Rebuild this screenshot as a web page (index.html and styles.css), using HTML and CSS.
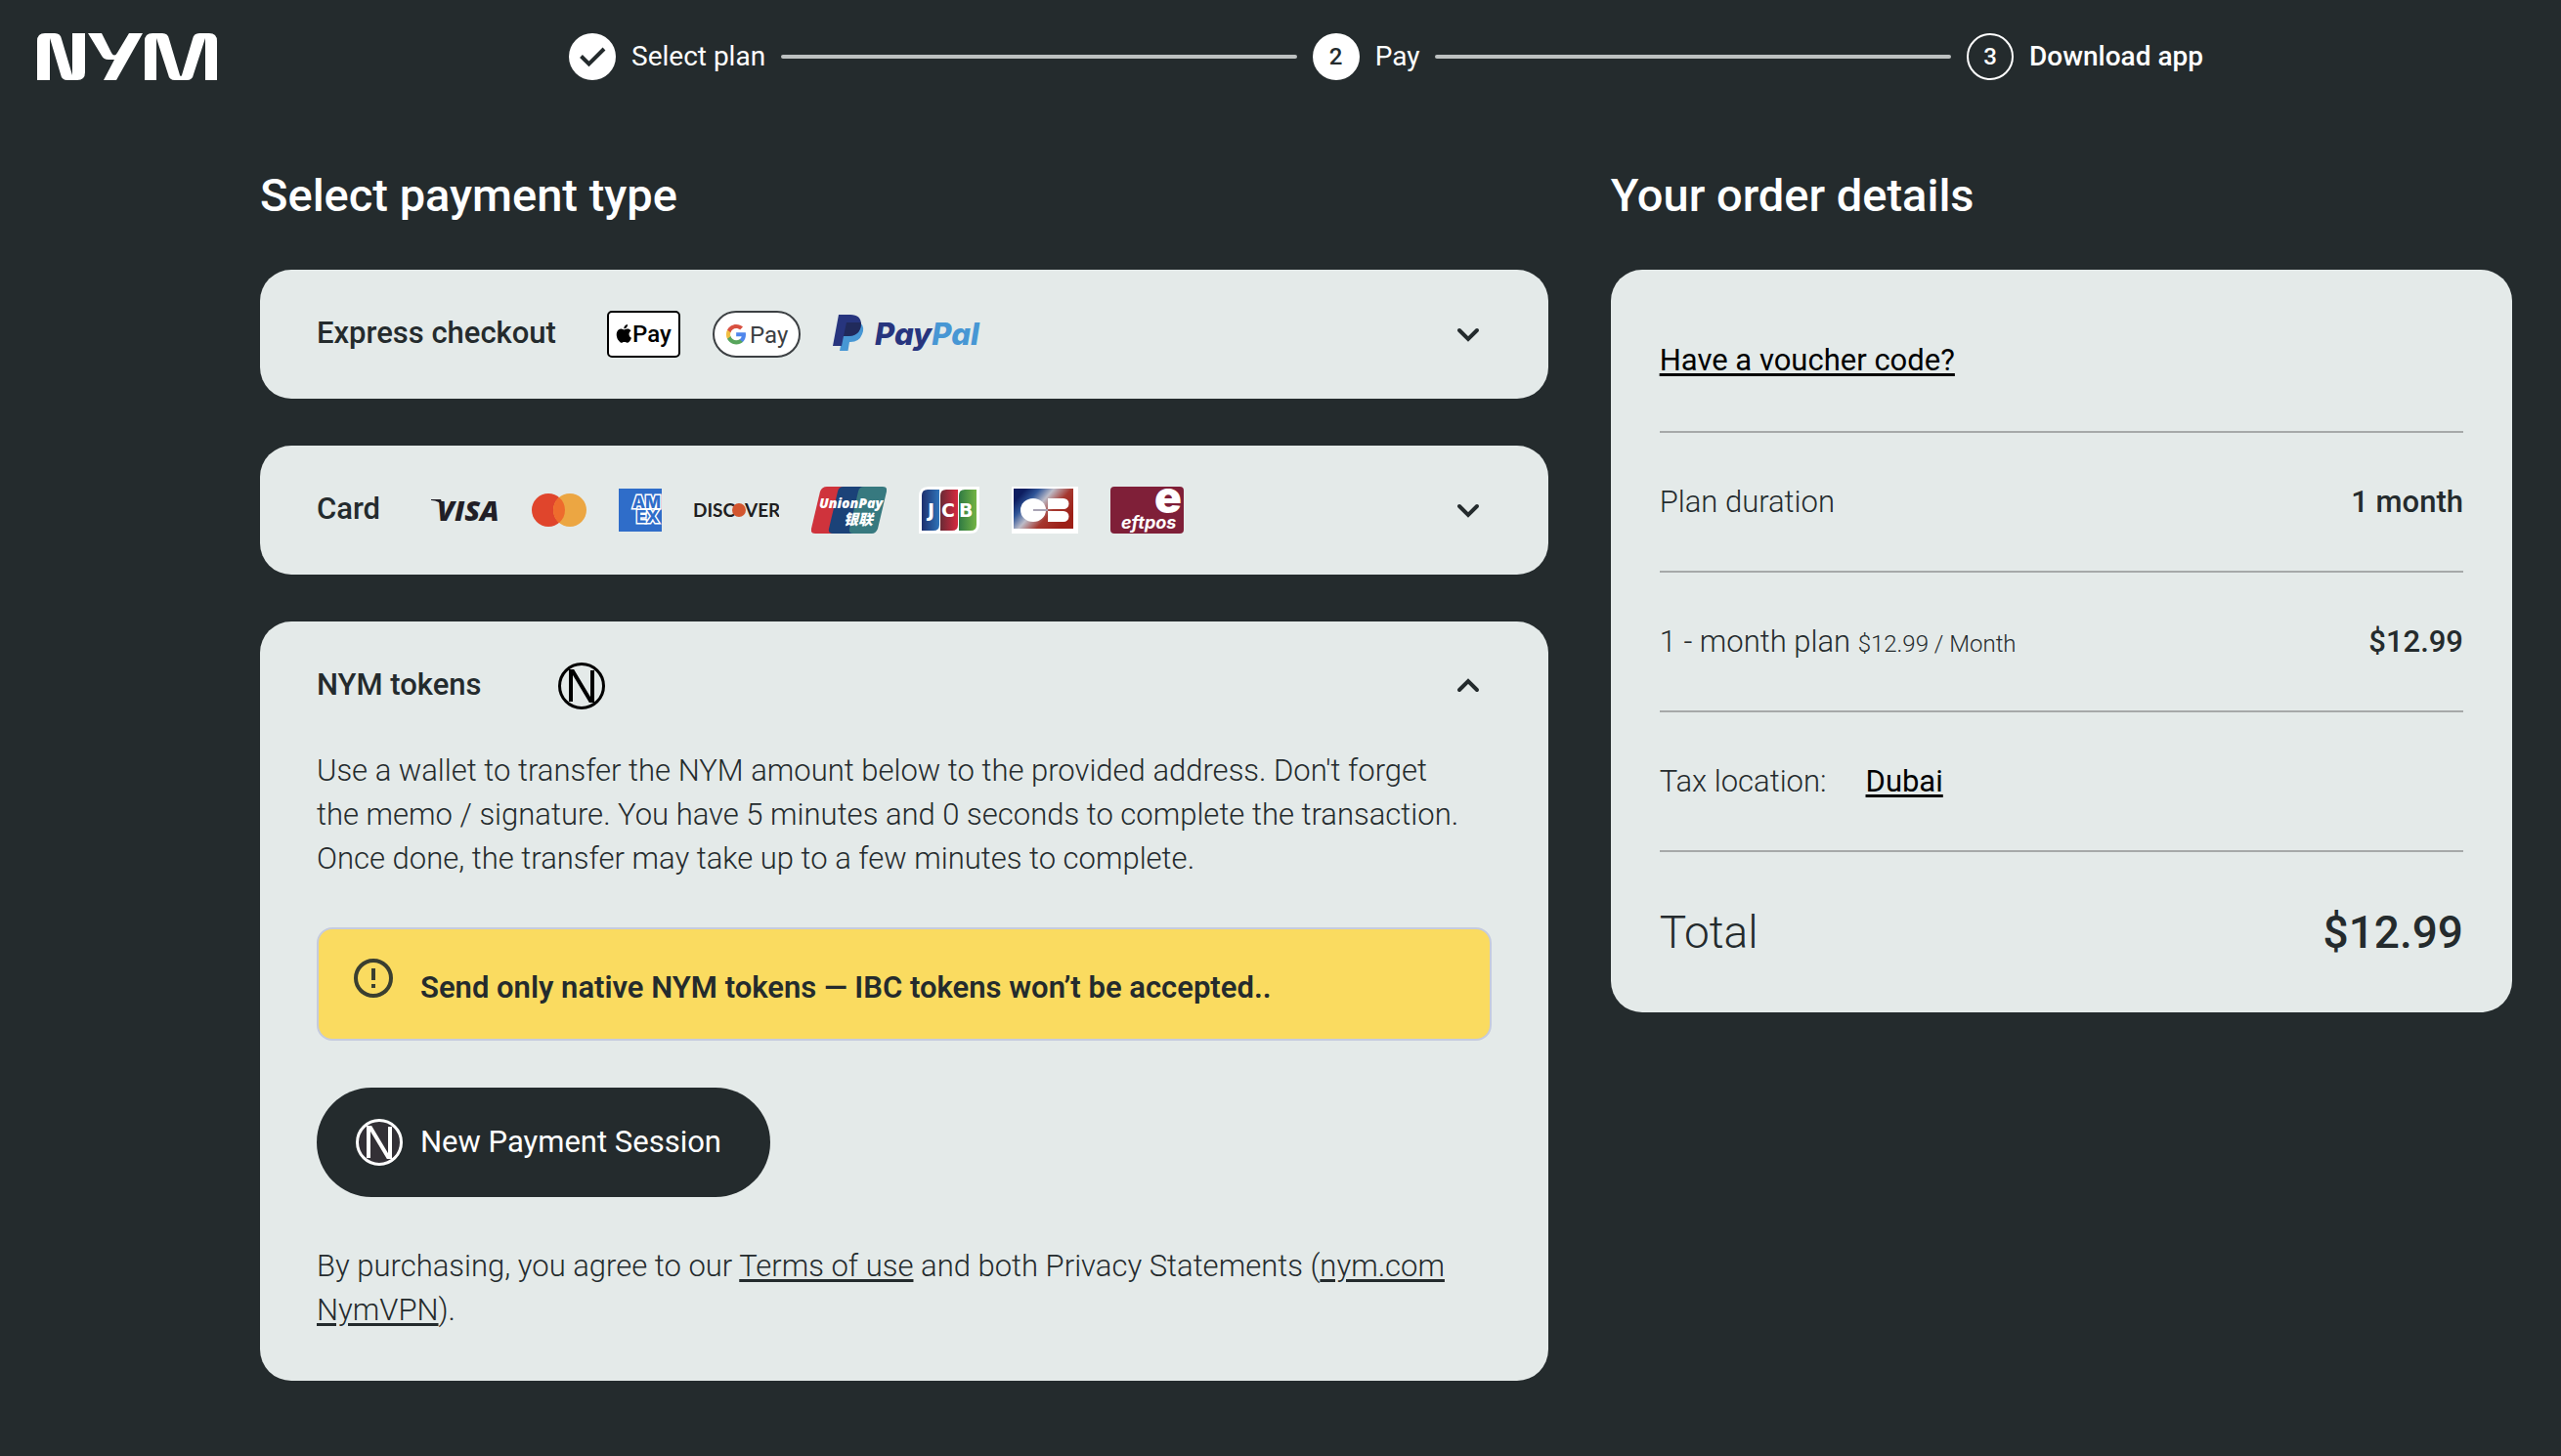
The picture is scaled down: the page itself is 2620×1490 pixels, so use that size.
FILE: index.html
```html
<!DOCTYPE html>
<html lang="en">
<head>
<meta charset="utf-8">
<meta name="viewport" content="width=device-width, initial-scale=1">
<title>NymVPN checkout</title>
<link rel="stylesheet" href="styles.css">
</head>
<body>
<header class="topbar">
  <a class="brand" href="#" aria-label="Nym home">
    <svg width="184" height="48" viewBox="0 0 184 48" fill="currentColor" aria-hidden="true">
      <path d="M0 48V8Q0 0 8 0H18Q24 0 25 6L36 43V0H49V40Q49 48 41 48H31Q25 48 24 42L13 5V48Z"/>
      <path d="M52 0H66L76 20Q79 25 82 20L94 0H108L81 48H68L79 27H73Q68 27 66 23Z"/>
      <path d="M110 48V8Q110 0 118 0H128Q134 0 135 6L146 43Q147 45 148 43L159 6Q160 0 166 0H176Q184 0 184 8V48H172V5L160 42Q159 48 153 48H141Q135 48 134 42L122 5V48Z"/>
    </svg>
  </a>
  <ol class="stepper">
    <li class="step">
      <span class="step-dot step-dot-filled">
        <svg width="48" height="48" viewBox="0 0 48 48" fill="none" aria-hidden="true"><path d="M12.500 23.500L20.500 31.500L36 16" stroke="currentColor" stroke-width="4"/></svg>
      </span>
      <span class="step-label">Select plan</span>
    </li>
    <li class="step" aria-current="step">
      <span class="step-dot step-dot-filled">2</span>
      <span class="step-label">Pay</span>
    </li>
    <li class="step">
      <span class="step-dot">3</span>
      <span class="step-label step-label-strong">Download app</span>
    </li>
  </ol>
</header>

<main class="checkout">
  <section class="column">
    <h1 class="title">Select payment type</h1>
    <div class="methods">
      <div class="card">
        <button class="method" type="button" aria-expanded="false">
          <span class="method-name">Express checkout</span>
          <span class="logos">
            <svg width="75" height="48" viewBox="0 0 75 48" role="img" aria-label="Apple Pay">
              <rect x="1" y="1" width="73" height="46" rx="4" fill="#fff" stroke="#000" stroke-width="2"/>
              <path transform="translate(8 14) scale(.78)" d="M12.152 6.896c-.948 0-2.415-1.078-3.96-1.04-2.04.027-3.91 1.183-4.961 3.014-2.117 3.675-.546 9.103 1.519 12.09 1.013 1.454 2.208 3.09 3.792 3.039 1.52-.065 2.09-.987 3.935-.987 1.831 0 2.35.987 3.96.948 1.637-.026 2.676-1.48 3.676-2.948 1.156-1.688 1.636-3.325 1.662-3.415-.039-.013-3.182-1.221-3.22-4.857-.026-3.04 2.48-4.494 2.597-4.559-1.429-2.09-3.623-2.324-4.39-2.376-2-.156-3.675 1.09-4.61 1.09zM15.53 3.83c.843-1.012 1.4-2.427 1.245-3.83-1.207.052-2.662.805-3.532 1.818-.78.896-1.454 2.338-1.273 3.714 1.338.104 2.715-.688 3.559-1.701"/>
              <text class="pay-text pay-text-strong" x="26" y="32">Pay</text>
            </svg>
            <svg width="90" height="48" viewBox="0 0 90 48" role="img" aria-label="Google Pay">
              <rect x="1" y="1" width="88" height="46" rx="23" fill="#fff" stroke="#3c4043" stroke-width="2"/>
              <g transform="translate(13 13) scale(.93)">
                <path fill="#4f86ec" d="M22.560 12.250c0-.78-.07-1.530-.2-2.250H12v4.260h5.920c-.26 1.370-1.040 2.530-2.210 3.310v2.770h3.570c2.080-1.920 3.280-4.740 3.280-8.090z"/>
                <path fill="#58a55c" d="M12 23c2.970 0 5.460-.98 7.280-2.660l-3.570-2.770c-.98.66-2.230 1.060-3.710 1.060-2.860 0-5.290-1.930-6.160-4.530H2.180v2.840C3.990 20.530 7.700 23 12 23z"/>
                <path fill="#f1be42" d="M5.840 14.090c-.22-.66-.35-1.360-.35-2.090s.13-1.430.35-2.090V7.070H2.180C1.430 8.550 1 10.220 1 12s.43 3.450 1.180 4.930l2.850-2.220.81-.62z"/>
                <path fill="#d85040" d="M12 5.380c1.620 0 3.060.56 4.210 1.640l3.150-3.150C17.450 2.090 14.970 1 12 1 7.700 1 3.990 3.470 2.180 7.070l3.660 2.840c.87-2.600 3.300-4.530 6.160-4.530z"/>
              </g>
              <text class="pay-text pay-text-grey" x="38" y="33">Pay</text>
            </svg>
            <svg width="156" height="48" viewBox="0 0 156 48" role="img" aria-label="PayPal">
              <path fill="#4797d4" d="M28 12Q33 17 30 24Q27 32 18 32H17L15.500 41H7L11 20Z"/>
              <path fill="#27357e" d="M6 4H18Q29 4 29 14Q28 26 15 26H11L9 36H0Z"/>
              <path fill="#202a5b" d="M14 12H28.900Q29 26 15 26H11Z"/>
              <text class="paypal-text" x="43" y="35"><tspan fill="#27357e">Pay</tspan><tspan fill="#4797d4">Pal</tspan></text>
            </svg>
          </span>
          <svg class="chevron" width="48" height="48" viewBox="0 0 48 48" fill="none" aria-hidden="true"><path d="M15 20L24 29L33 20"/></svg>
        </button>
      </div>

      <div class="card">
        <button class="method" type="button" aria-expanded="false">
          <span class="method-name">Card</span>
          <span class="logos">
            <svg width="70" height="48" viewBox="0 0 70 48" role="img" aria-label="Visa">
              <path d="M0 13H10L13 22Q9 14 0 14Z" fill="#221f26"/>
              <text class="visa-text" x="6" y="35">VISA</text>
            </svg>
            <svg width="56" height="48" viewBox="0 0 56 48" role="img" aria-label="Mastercard">
              <circle cx="17" cy="24" r="17" fill="#e0452c"/>
              <circle cx="39" cy="24" r="17" fill="#eca642"/>
              <path d="M28 11.040A17 17 0 0 1 28 36.960A17 17 0 0 1 28 11.040Z" fill="#ee6b2d"/>
            </svg>
            <svg width="44" height="44" viewBox="0 0 44 44" role="img" aria-label="American Express">
              <path d="M0 0H44V44H0Z" fill="#2f6dc9"/>
              <text class="amex-text" x="14" y="20">AM</text>
              <text class="amex-text" x="18" y="35">EX</text>
            </svg>
            <svg width="87" height="48" viewBox="0 0 87 48" role="img" aria-label="Discover">
              <text class="discover-text" x="-1" y="31">DISC</text>
              <circle cx="46" cy="24" r="7" fill="#d3562f"/>
              <text class="discover-text" x="52" y="31">VER</text>
            </svg>
            <svg width="77" height="48" viewBox="0 0 77 48" role="img" aria-label="UnionPay">
              <path d="M16 0H34L22 48H4Q-1 48 0 43L9 5Q11 0 16 0Z" fill="#cf333c"/>
              <path d="M33 0H56L44 48H22Q17 48 18 43L27 5Q28 0 33 0Z" fill="#1b4278"/>
              <path d="M54 0H73Q78 0 77 5L68 43Q66 48 62 48H43Q38 48 39 43L48 5Q49 0 54 0Z" fill="#37797f"/>
              <text class="union-text" x="8" y="22">UnionPay</text>
              <text class="union-cjk" x="33" y="39">银联</text>
            </svg>
            <svg width="62" height="48" viewBox="0 0 62 48" role="img" aria-label="JCB">
              <defs>
                <linearGradient id="jcb-blue"><stop offset="0" stop-color="#1d2f6e"/><stop offset="1" stop-color="#2f74b9"/></linearGradient>
                <linearGradient id="jcb-red"><stop offset="0" stop-color="#692a35"/><stop offset="1" stop-color="#d7293f"/></linearGradient>
                <linearGradient id="jcb-green"><stop offset="0" stop-color="#2f7a43"/><stop offset="1" stop-color="#74b444"/></linearGradient>
              </defs>
              <path d="M10 0H62V38Q62 48 52 48H0V10Q0 0 10 0Z" fill="#fff"/>
              <path d="M9 3H21V39Q21 45 15 45H3V9Q3 3 9 3Z" fill="url(#jcb-blue)"/>
              <path d="M28 3H40V39Q40 45 34 45H22V9Q22 3 28 3Z" fill="url(#jcb-red)"/>
              <path d="M47 3H59V39Q59 45 53 45H41V9Q41 3 47 3Z" fill="url(#jcb-green)"/>
              <text class="jcb-text" x="9" y="31">J</text>
              <text class="jcb-text" x="23" y="31">C</text>
              <text class="jcb-text" x="41" y="31">B</text>
            </svg>
            <svg width="68" height="48" viewBox="0 0 68 48" role="img" aria-label="Cartes Bancaires">
              <defs>
                <linearGradient id="cb-sheen" x1="0" y1="0" x2="1" y2=".6"><stop offset=".15" stop-color="#0d1d60"/><stop offset=".32" stop-color="#2f5598"/><stop offset=".5" stop-color="#bdbcc8"/><stop offset=".72" stop-color="#a5382f"/><stop offset="1" stop-color="#9d1f17"/></linearGradient>
              </defs>
              <path d="M0 0H68V48H0Z" fill="#fff"/>
              <path d="M2 2H63V43H2Z" fill="url(#cb-sheen)"/>
              <ellipse cx="22" cy="24" rx="13" ry="12" fill="#fff"/>
              <path d="M37 12H53A5.500 5.500 0 0 1 53 23H37ZM37 25H53A5.500 5.500 0 0 1 53 36H37Z" fill="#fff"/>
              <path d="M22 24H37" stroke="#a9a3b4" stroke-width="2"/>
            </svg>
            <svg width="75" height="48" viewBox="0 0 75 48" role="img" aria-label="eftpos">
              <rect width="75" height="48" rx="4" fill="#7f1f38"/>
              <text class="eft-mark" x="45" y="27">e</text>
              <text class="eft-text" x="11" y="43">eftpos</text>
            </svg>
          </span>
          <svg class="chevron" width="48" height="48" viewBox="0 0 48 48" fill="none" aria-hidden="true"><path d="M15 20L24 29L33 20"/></svg>
        </button>
      </div>

      <div class="card">
        <button class="method method-open" type="button" aria-expanded="true" aria-controls="nym-panel">
          <span class="method-name">NYM tokens</span>
          <span class="logos logos-token">
            <svg width="48" height="48" viewBox="0 0 48 48" fill="none" stroke="#000" aria-hidden="true">
              <circle cx="24" cy="24" r="22.500" stroke-width="3"/>
              <path d="M13 40V9H15L33 39H35V8" stroke-width="4"/>
            </svg>
          </span>
          <svg class="chevron" width="48" height="48" viewBox="0 0 48 48" fill="none" aria-hidden="true"><path d="M15 28L24 19L33 28"/></svg>
        </button>
        <div class="panel" id="nym-panel">
          <p class="copy">Use a wallet to transfer the NYM amount below to the provided address. Don't forget the memo / signature. You have 5 minutes and 0 seconds to complete the transaction. Once done, the transfer may take up to a few minutes to complete.</p>
          <div class="alert" role="alert">
            <svg width="40" height="40" viewBox="0 0 40 40" fill="none" aria-hidden="true"><circle cx="20" cy="20" r="18" stroke="currentColor" stroke-width="4"/><path d="M20 10V22M20 26V30" stroke="currentColor" stroke-width="4"/></svg>
            <span class="alert-text">Send only native NYM tokens — IBC tokens won’t be accepted..</span>
          </div>
          <button class="cta" type="button">
            <svg width="48" height="48" viewBox="0 0 48 48" stroke="#fff" aria-hidden="true">
              <circle cx="24" cy="24" r="22.500" fill="#333036" stroke-width="3"/>
              <path d="M13 40V9H15L33 39H35V8" fill="none" stroke-width="4"/>
            </svg>
            New Payment Session
          </button>
          <p class="copy">By purchasing, you agree to our <a href="#">Terms of use</a> and both Privacy Statements (<a href="#">nym.com</a> <a href="#">NymVPN</a>).</p>
        </div>
      </div>
    </div>
  </section>

  <section class="column">
    <h2 class="title">Your order details</h2>
    <div class="card order">
      <div class="row row-voucher"><a class="dark-link" href="#">Have a voucher code?</a></div>
      <div class="row"><span>Plan duration</span><strong class="amount">1 month</strong></div>
      <div class="row"><span>1 - month plan <small class="rate">$12.99 / Month</small></span><strong class="amount">$12.99</strong></div>
      <div class="row row-tax"><span>Tax location:</span><a class="dark-link" href="#">Dubai</a></div>
      <div class="row row-total"><span>Total</span><strong class="amount">$12.99</strong></div>
    </div>
  </section>
</main>
</body>
</html>
```
FILE: styles.css
```css
* {
  box-sizing: border-box;
}

body {
  margin: 0;
  min-height: 100vh;
  background: #242b2d;
  color: #242b2d;
  font-family: Roboto, "Liberation Sans", sans-serif;
  font-size: 31px;
  font-weight: 300;
  line-height: 45px;
}

svg {
  display: block;
  flex: none;
}

h1, h2, p, ol {
  margin: 0;
  padding: 0;
}

button {
  font: inherit;
  color: inherit;
  border: 0;
  background: none;
  cursor: pointer;
}

a {
  color: inherit;
  text-decoration-thickness: 3px;
  text-underline-offset: 3px;
}

/* Top bar */
.topbar {
  display: flex;
  align-items: center;
  gap: 360px;
  padding: 34px 366px 34px 38px;
  color: #fff;
}

.stepper {
  flex: 1;
  display: flex;
  gap: 16px;
  list-style: none;
}

.step {
  display: flex;
  align-items: center;
  gap: 16px;
  font-size: 28px;
  font-weight: 400;
  line-height: 48px;
  white-space: nowrap;
}

.step:not(:last-child) {
  flex: 1 1 auto;
}

.step:not(:last-child)::after {
  content: "";
  flex: 1;
  height: 4px;
  border-radius: 2px;
  background: #bdc1c1;
}

.step-dot {
  display: grid;
  place-items: center;
  flex: none;
  width: 48px;
  height: 48px;
  border: 2px solid #fff;
  border-radius: 50%;
  font-size: 24px;
  font-weight: 500;
  line-height: 28px;
}

.step-dot-filled {
  border: 0;
  background: #fff;
  color: #242b2d;
}

.step-label-strong {
  font-weight: 500;
}

/* Two-column layout */
.checkout {
  display: grid;
  grid-template-columns: 10fr 7fr;
  gap: 64px;
  align-items: start;
  padding: 56px 50px 78px 266px;
}

.title {
  margin-bottom: 48px;
  color: #fff;
  font-size: 47px;
  font-weight: 500;
  line-height: 56px;
}

.methods {
  display: grid;
  gap: 48px;
}

.card {
  border-radius: 32px;
  background: #e4eae9;
}

.method {
  display: flex;
  align-items: center;
  gap: 52px;
  width: 100%;
  padding: 42px 58px;
  text-align: left;
}

.method-open {
  padding-bottom: 40px;
}

.method-name {
  padding-bottom: 3px;
  font-weight: 500;
}

.logos {
  display: flex;
  flex: 1;
  align-items: center;
  gap: 33px;
}

.logos-token {
  padding-left: 26px;
}

.chevron path {
  stroke: currentColor;
  stroke-width: 4;
  stroke-linecap: round;
}

/* Lettering inside the payment marks */
.pay-text {
  font: 400 24px Roboto, sans-serif;
}

.pay-text-strong {
  font-weight: 500;
}

.pay-text-grey {
  fill: #3c4043;
}

.paypal-text {
  font: italic 800 31px Inter, sans-serif;
}

.visa-text {
  font: italic 800 29px "Open Sans", sans-serif;
  fill: #221f26;
}

.amex-text {
  font: 800 17px Inter, sans-serif;
  fill: #2f6dc9;
  stroke: #fff;
  stroke-width: 3;
  paint-order: stroke;
}

.discover-text {
  font: 700 19px Lato, sans-serif;
  fill: #1f1f21;
}

.union-text {
  font: italic 800 14px "Open Sans", sans-serif;
  fill: #fff;
}

.union-cjk {
  font: italic 900 15px "Noto Sans CJK SC", sans-serif;
  fill: #fff;
}

.jcb-text {
  font: 700 19px "DejaVu Sans", sans-serif;
  fill: #fff;
}

.eft-mark {
  font: 900 46px Inter, sans-serif;
  fill: #fff;
}

.eft-text {
  font: italic 700 18px Inter, sans-serif;
  fill: #fff;
}

/* Expanded panel */
.panel {
  display: flex;
  flex-direction: column;
  align-items: flex-start;
  gap: 48px;
  padding: 0 58px 50px;
}

.copy {
  padding-right: 30px;
}

.alert {
  display: flex;
  align-self: stretch;
  gap: 28px;
  padding: 30px 36px;
  border: 2px solid #c5cbde;
  border-radius: 16px;
  background: #fadb60;
  color: #3a3f30;
}

.alert-text {
  padding-top: 7px;
  color: #242b2d;
  font-weight: 600;
}

.cta {
  display: flex;
  align-items: center;
  gap: 18px;
  padding: 32px 50px 32px 40px;
  border-radius: 56px;
  background: #242b2d;
  color: #fff;
  font-weight: 400;
  line-height: 48px;
}

/* Order summary */
.order {
  padding: 22px 50px 0;
}

.row {
  display: flex;
  justify-content: space-between;
  padding: 48px 0;
  border-bottom: 2px solid #a6a9a9;
}

.row-voucher {
  padding-bottom: 50px;
}

.row-tax {
  justify-content: flex-start;
  gap: 40px;
}

.row-total {
  border-bottom: 0;
  font-size: 46px;
  line-height: 68px;
}

.amount {
  font-weight: 500;
}

.rate {
  font-size: 24px;
  line-height: 1;
}

.dark-link {
  color: #000;
  font-weight: 400;
}
```
